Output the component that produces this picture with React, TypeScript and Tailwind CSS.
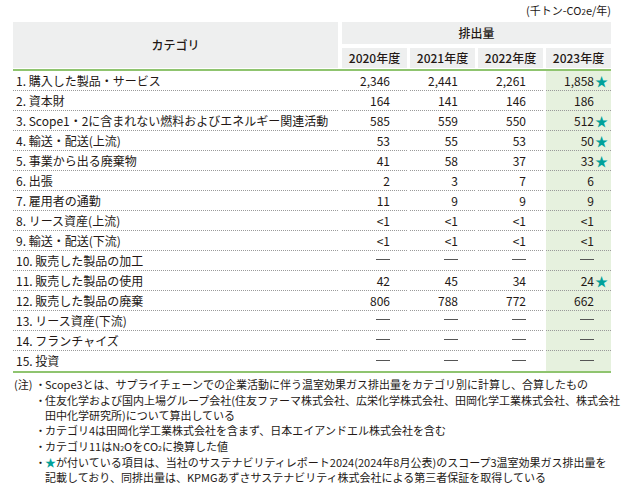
import React from "react";

type Row = { label: string; v: string[]; star?: boolean };

const rows: Row[] = [
  { label: "1. 購入した製品・サービス", v: ["2,346", "2,441", "2,261", "1,858"], star: true },
  { label: "2. 資本財", v: ["164", "141", "146", "186"] },
  { label: "3. Scope1・2に含まれない燃料およびエネルギー関連活動", v: ["585", "559", "550", "512"], star: true },
  { label: "4. 輸送・配送(上流)", v: ["53", "55", "53", "50"], star: true },
  { label: "5. 事業から出る廃棄物", v: ["41", "58", "37", "33"], star: true },
  { label: "6. 出張", v: ["2", "3", "7", "6"] },
  { label: "7. 雇用者の通勤", v: ["11", "9", "9", "9"] },
  { label: "8. リース資産(上流)", v: ["<1", "<1", "<1", "<1"] },
  { label: "9. 輸送・配送(下流)", v: ["<1", "<1", "<1", "<1"] },
  { label: "10. 販売した製品の加工", v: ["—", "—", "—", "—"] },
  { label: "11. 販売した製品の使用", v: ["42", "45", "34", "24"], star: true },
  { label: "12. 販売した製品の廃棄", v: ["806", "788", "772", "662"] },
  { label: "13. リース資産(下流)", v: ["—", "—", "—", "—"] },
  { label: "14. フランチャイズ", v: ["—", "—", "—", "—"] },
  { label: "15. 投資", v: ["—", "—", "—", "—"] },
];

const years = ["2020年度", "2021年度", "2022年度", "2023年度"];

function Dash() {
  return <span className="inline-block w-[14px] h-[1px] bg-[#555] align-middle mb-[2px]" />;
}

export default function App() {
  return (
    <div
      className="w-[624px] h-[484px] overflow-hidden bg-white text-[#231815] px-[13px]"
      style={{ fontFamily: '"Noto Sans CJK JP", "Noto Sans", sans-serif' }}
    >
      <div className="h-[23px] text-right text-[11px] leading-[23px] -mt-[1px]">
        (千トン-CO<span className="text-[8px]">2</span>e/年)
      </div>

      {/* header */}
      <div className="flex h-[46px]">
        <div className="w-[325px] bg-[#eeefef] flex items-center justify-center text-[12px] font-medium">
          カテゴリ
        </div>
        <div className="ml-[4px] flex-1 flex flex-col">
          <div className="h-[22px] bg-[#eeefef] flex items-center justify-center text-[12px] font-medium">
            排出量
          </div>
          <div className="mt-[4px] h-[20px] flex gap-[3px]">
            {years.map((y) => (
              <div
                key={y}
                className="w-[65px] bg-[#eeefef] flex items-center justify-center text-[12px] font-medium"
              >
                {y}
              </div>
            ))}
          </div>
        </div>
      </div>
      <div className="h-[2px] bg-[#8fc46f] mt-[1px]" />

      {/* body */}
      <div className="flex flex-col">
        {rows.map((r, i) => {
          const last = i === rows.length - 1;
          const b = last ? "" : "border-b border-dotted border-[#9a9a9a]";
          return (
            <div key={r.label} className="flex h-[20px] text-[12px]">
              <div className={`w-[325px] pl-[3px] flex items-center ${b}`}>{r.label}</div>
              <div className="ml-[4px] flex gap-[3px]">
                {r.v.map((v, j) => (
                  <div
                    key={j}
                    className={`relative w-[65px] flex items-center justify-end pr-[17px] ${b} ${
                      j === 3 ? "bg-[#e6f1de]" : ""
                    }`}
                  >
                    {v === "—" ? <Dash /> : v}
                    {j === 3 && r.star ? (
                      <span className="absolute right-[3px] top-[0px] text-[13px] leading-[20px] text-[#00a19a]">
                        ★
                      </span>
                    ) : null}
                  </div>
                ))}
              </div>
            </div>
          );
        })}
      </div>
      <div className="h-[2px] bg-[#8fc46f]" />

      {/* notes */}
      <div className="mt-[4px] flex text-[11px] leading-[15px]">
        <div className="w-[22px] shrink-0 pl-[1px]">(注)</div>
        <div className="flex flex-col gap-[1px]">
          <div className="flex h-[15px] overflow-visible">
            <span className="w-[10px] shrink-0">・</span>
            <span>Scope3とは、サプライチェーンでの企業活動に伴う温室効果ガス排出量をカテゴリ別に計算し、合算したもの</span>
          </div>
          <div className="flex h-[29px] leading-[14.5px]">
            <span className="w-[10px] shrink-0">・</span>
            <span className="whitespace-nowrap">
              住友化学および国内上場グループ会社(住友ファーマ株式会社、広栄化学株式会社、田岡化学工業株式会社、株式会社
              <br />
              田中化学研究所)について算出している
            </span>
          </div>
          <div className="flex h-[15px]">
            <span className="w-[10px] shrink-0">・</span>
            <span>カテゴリ4は田岡化学工業株式会社を含まず、日本エイアンドエル株式会社を含む</span>
          </div>
          <div className="flex h-[15px]">
            <span className="w-[10px] shrink-0">・</span>
            <span>
              カテゴリ11はN<span className="text-[7px] leading-[0]">2</span>OをCO<span className="text-[7px] leading-[0]">2</span>に換算した値
            </span>
          </div>
          <div className="flex h-[29px] leading-[14.5px]">
            <span className="w-[10px] shrink-0">・</span>
            <span className="whitespace-nowrap">
              <span className="text-[#00a19a] leading-[0]">★</span>
              が付いている項目は、当社のサステナビリティレポート2024(2024年8月公表)のスコープ3温室効果ガス排出量を
              <br />
              記載しており、同排出量は、KPMGあずさサステナビリティ株式会社による第三者保証を取得している
            </span>
          </div>
        </div>
      </div>
    </div>
  );
}
